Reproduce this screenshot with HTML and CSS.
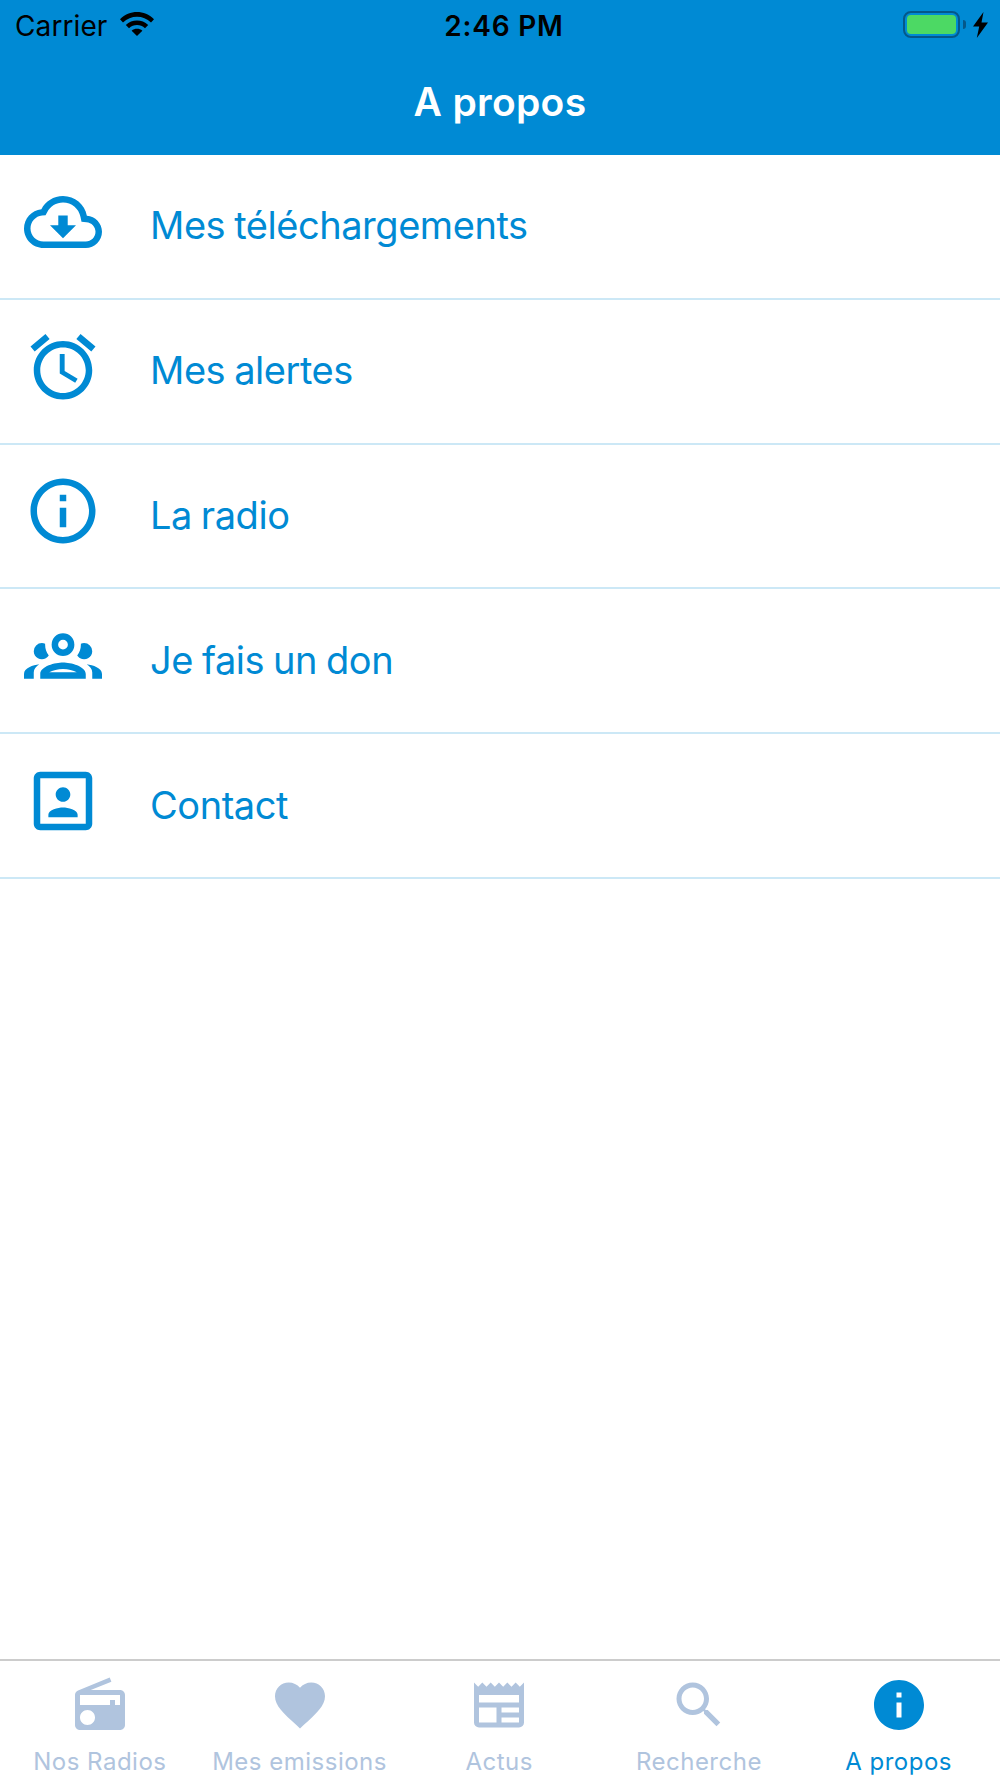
FILE: index.html
```html
<!DOCTYPE html>
<html lang="fr">

	<head>
		<meta charset="UTF-8">
		<title>A propos</title>
		<link rel="stylesheet" href="styles.css">
	</head>

	<body>
		<div id="app">
			<header>
				<div class="status">
					<div class="carrier">
						<span>Carrier</span>
						<svg class="wifi" viewBox="0 0 34 24">
							<path d="M0 7.2C9.500-2.400 24.500-2.400 34 7.200L31 10.500C23.200 2.900 10.800 2.900 3 10.500z" />
							<path d="M5.800 12.900C12 7 22 7 28.200 12.900L25 16.200C20.500 12 13.500 12 9 16.200z" />
							<path d="M11.600 18.800C14.700 16.200 19.300 16.200 22.400 18.800L17 24z" />
						</svg>
					</div>
					<div class="time">2:46 PM</div>
					<div class="power">
						<div class="battery"></div>
						<div class="tip"></div>
						<svg class="bolt" viewBox="0 0 15 26">
							<path d="M10.500 0L0 14.500h6.200L3.800 26 15 10.500H8.500z" />
						</svg>
					</div>
				</div>
				<h1>A propos</h1>
			</header>
			<ul class="menu">
				<li>
					<svg viewBox="0 0 24 24"><path d="M19.350 10.040C18.670 6.590 15.640 4 12 4 9.110 4 6.600 5.640 5.350 8.040 2.340 8.360 0 10.910 0 14c0 3.310 2.690 6 6 6h13c2.760 0 5-2.240 5-5 0-2.640-2.050-4.780-4.650-4.960zM19 18H6c-2.210 0-4-1.790-4-4 0-2.050 1.530-3.760 3.560-3.970l1.070-.110.500-.950C8.080 7.140 9.940 6 12 6c2.620 0 4.880 1.860 5.390 4.430l.300 1.500 1.530.110c1.560.100 2.780 1.410 2.780 2.960 0 1.650-1.350 3-3 3zM13.450 10h-2.900v3H8l4 4 4-4h-2.550z" /></svg>
					<span>Mes téléchargements</span>
				</li>
				<li>
					<svg viewBox="0 0 24 24"><path d="M22 5.720l-4.600-3.860-1.290 1.530 4.600 3.860L22 5.720zM7.880 3.390L6.600 1.860 2 5.710l1.290 1.530 4.590-3.850zM12.500 8H11v6l4.750 2.850.750-1.230-4-2.370V8zM12 4c-4.970 0-9 4.030-9 9s4.020 9 9 9c4.970 0 9-4.030 9-9s-4.030-9-9-9zm0 16c-3.870 0-7-3.130-7-7s3.130-7 7-7 7 3.130 7 7-3.130 7-7 7z" /></svg>
					<span>Mes alertes</span>
				</li>
				<li>
					<svg viewBox="0 0 24 24"><path d="M11 17h2v-6h-2v6zm1-15C6.480 2 2 6.480 2 12s4.480 10 10 10 10-4.480 10-10S17.520 2 12 2zm0 18c-4.410 0-8-3.590-8-8s3.590-8 8-8 8 3.590 8 8-3.590 8-8 8zM11 9h2V7h-2v2z" /></svg>
					<span>La radio</span>
				</li>
				<li>
					<svg viewBox="0 0 24 24"><path d="M12 5A3.500 3.500 0 0 0 8.500 8.500 3.500 3.500 0 0 0 12 12 3.500 3.500 0 0 0 15.500 8.500 3.500 3.500 0 0 0 12 5M12 7A1.500 1.500 0 0 1 13.500 8.500 1.500 1.500 0 0 1 12 10 1.500 1.500 0 0 1 10.500 8.500 1.500 1.500 0 0 1 12 7M5.500 8A2.500 2.500 0 0 0 3 10.500C3 11.440 3.530 12.250 4.290 12.680 4.650 12.880 5.060 13 5.500 13 5.940 13 6.350 12.880 6.710 12.680 7.080 12.470 7.390 12.170 7.620 11.810 6.890 10.860 6.500 9.700 6.500 8.500V8.220C6.200 8.080 5.860 8 5.500 8M18.500 8C18.140 8 17.800 8.080 17.500 8.220V8.500C17.500 9.700 17.110 10.860 16.380 11.810 16.500 12 16.630 12.150 16.780 12.300 16.940 12.450 17.100 12.580 17.290 12.680 17.650 12.880 18.060 13 18.500 13 18.940 13 19.350 12.880 19.710 12.680 20.470 12.250 21 11.440 21 10.500A2.500 2.500 0 0 0 18.500 8M12 14C9.660 14 5 15.170 5 17.500V19H19V17.500C19 15.170 14.340 14 12 14M4.710 14.550C2.780 14.780 0 15.760 0 17.500V19H3V17.070C3 16.060 3.690 15.220 4.710 14.550M19.290 14.550C20.310 15.220 21 16.060 21 17.070V19H24V17.500C24 15.760 21.220 14.780 19.290 14.550M12 16C13.530 16 15.240 16.500 16.230 17H7.770C8.760 16.500 10.470 16 12 16z" /></svg>
					<span>Je fais un don</span>
				</li>
				<li>
					<svg viewBox="0 0 24 24"><path d="M12 12.250c1.240 0 2.250-1.010 2.250-2.250S13.240 7.750 12 7.750 9.750 8.760 9.750 10s1.010 2.250 2.250 2.250zm4.500 4c0-1.500-3-2.250-4.500-2.250s-4.500.750-4.500 2.250V17h9v-.750zM19 3H5c-1.100 0-2 .900-2 2v14c0 1.100.900 2 2 2h14c1.100 0 2-.900 2-2V5c0-1.100-.900-2-2-2zm0 16H5V5h14v14z" /></svg>
					<span>Contact</span>
				</li>
			</ul>
			<nav>
				<a href="#">
					<svg viewBox="0 0 24 24"><path d="M3.240 6.150C2.510 6.430 2 7.170 2 8v12c0 1.100.890 2 2 2h16c1.110 0 2-.900 2-2V8c0-1.110-.890-2-2-2H8.300l8.260-3.340L15.880 1 3.240 6.150zM7 20c-1.660 0-3-1.340-3-3s1.340-3 3-3 3 1.340 3 3-1.340 3-3 3zm13-8h-2v-2h-2v2H4V8h16v4z" /></svg>
					<span>Nos Radios</span>
				</a>
				<a href="#">
					<svg viewBox="0 0 24 24"><path d="M12 21.350l-1.450-1.320C5.400 15.360 2 12.280 2 8.500 2 5.420 4.420 3 7.500 3c1.740 0 3.410.810 4.500 2.090C13.090 3.810 14.760 3 16.500 3 19.580 3 22 5.420 22 8.500c0 3.780-3.400 6.860-8.550 11.540L12 21.350z" /></svg>
					<span>Mes emissions</span>
				</a>
				<a href="#">
					<svg viewBox="0 0 24 24"><path d="M20 11H4V8H20M20 15H13V13H20M20 19H13V17H20M11 19H4V13H11M20.330 4.670L18.670 3 17 4.670 15.330 3 13.670 4.670 12 3 10.330 4.670 8.670 3 7 4.670 5.330 3 3.670 4.670 2 3V19A2 2 0 0 0 4 21H20A2 2 0 0 0 22 19V3L20.330 4.670z" /></svg>
					<span>Actus</span>
				</a>
				<a href="#">
					<svg viewBox="0 0 24 24"><path d="M15.500 14h-.790l-.280-.270C15.410 12.590 16 11.110 16 9.500 16 5.910 13.090 3 9.500 3S3 5.910 3 9.500 5.910 16 9.500 16c1.610 0 3.090-.590 4.230-1.570l.270.280v.790l5 4.990L20.490 19l-4.990-5zm-6 0C7.010 14 5 11.990 5 9.500S7.010 5 9.500 5 14 7.010 14 9.500 11.990 14 9.500 14z" /></svg>
					<span>Recherche</span>
				</a>
				<a href="#" class="active">
					<svg viewBox="0 0 24 24"><path d="M12 2C6.480 2 2 6.480 2 12s4.480 10 10 10 10-4.480 10-10S17.520 2 12 2zm1 15h-2v-6h2v6zm0-8h-2V7h2v2z" /></svg>
					<span>A propos</span>
				</a>
			</nav>
		</div>
	</body>

</html>
```
FILE: styles.css
```css
* {
	margin: 0;
	padding: 0;
	box-sizing: border-box;
}

body {
	font-family: Inter, "Liberation Sans", sans-serif;
	background: #fff;
}

svg {
	display: block;
	flex-shrink: 0;
	fill: currentColor;
}

#app {
	width: 1000px;
	height: 1778px;
	display: flex;
	flex-direction: column;
	overflow: hidden;
}

header {
	height: 155px;
	background: #008ad4;
}

.status {
	height: 53px;
	padding: 0 12px 0 15px;
	display: grid;
	grid-template-columns: 1fr auto 1fr;
	font-size: 28px;
	line-height: 52px;
	color: #000;
}

.carrier {
	display: flex;
	letter-spacing: 0.1px;
}

.wifi {
	width: 34px;
	height: 24px;
	margin: 12px 0 0 13px;
}

.time {
	padding-left: 5px;
	font-weight: 600;
	letter-spacing: 0.8px;
}

.power {
	display: flex;
	justify-content: flex-end;
}

.battery {
	width: 57px;
	height: 27px;
	margin-top: 11px;
	padding: 2px;
	border: 2px solid #04588a;
	border-radius: 8px;
	background: #4cd964 content-box;
}

.tip {
	width: 3px;
	height: 9px;
	margin: 20px 7px 0 3px;
	border-radius: 0 4px 4px 0;
	background: #04588a;
}

.bolt {
	width: 15px;
	height: 26px;
	margin-top: 12px;
}

h1 {
	font-size: 39px;
	font-weight: 600;
	line-height: 98px;
	letter-spacing: 0.3px;
	text-align: center;
	color: #fff;
}

.menu {
	flex: 1;
	list-style: none;
	color: #008ad4;
}

.menu li {
	height: 144.800px;
	padding: 0 0 2px 24px;
	display: flex;
	align-items: center;
	border-bottom: 2px solid #cce8f6;
	font-size: 38px;
	letter-spacing: -0.45px;
	word-spacing: -1.3px;
}

.menu svg {
	width: 78px;
	height: 78px;
	margin: 0 48px 7px 0;
}

nav {
	height: 119px;
	display: flex;
	border-top: 2px solid #ccc;
}

nav a {
	width: 199.700px;
	padding-top: 14px;
	display: flex;
	flex-direction: column;
	align-items: center;
	font-size: 24px;
	line-height: 53px;
	letter-spacing: 0.5px;
	text-decoration: none;
	color: #b0c4de;
}

nav svg {
	width: 60px;
	height: 60px;
}

nav .active {
	color: #008ad4;
}
```
